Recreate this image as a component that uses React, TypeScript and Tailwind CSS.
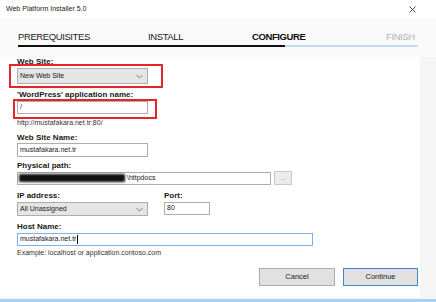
import React from 'react';

const font = { fontFamily: '"Liberation Sans", Arial, sans-serif' };

function Chevron() {
  return (
    <svg width="7" height="5" viewBox="0 0 7 5" className="text-[#707070]">
      <path d="M0.5 1 L3.5 4 L6.5 1" fill="none" stroke="currentColor" strokeWidth="0.9" />
    </svg>
  );
}

function Select({ value, width }: { value: string; width: string }) {
  return (
    <div className={`flex h-[14px] ${width} items-center justify-between border border-[#adadad] bg-[#e5e5e5] pl-[2px] pr-[4px] text-[7px] text-[#1a1a1a]`}>
      <span>{value}</span>
      <Chevron />
    </div>
  );
}

function Label({ text, className = '' }: { text: string; className?: string }) {
  return <div className={`h-[10px] text-[8px] font-bold leading-[10px] text-[#1a1a1a] ${className}`}>{text}</div>;
}

export default function App() {
  return (
    <div className="flex h-[302px] w-[436px] flex-col overflow-hidden bg-[#f6f6f6]" style={font}>
      {/* title bar */}
      <div className="flex h-[18px] items-center justify-between bg-white pl-[6px] pr-[20px]">
        <span className="text-[7px] text-[#222]">Web Platform Installer 5.0</span>
        <svg width="7" height="7" viewBox="0 0 7 7" className="text-[#333]">
          <path d="M0.5 0.5 L6.5 6.5 M6.5 0.5 L0.5 6.5" stroke="currentColor" strokeWidth="0.9" />
        </svg>
      </div>

      {/* steps */}
      <div className="h-[39px] bg-[#fafafa] pl-[18px] pt-[12px]">
        <div className="flex h-[14px] w-[400px] items-center text-[9.5px] tracking-[-0.4px]">
          <span className="w-[130px] text-[#222]">PREREQUISITES</span>
          <span className="w-[104px] text-[#222]">INSTALL</span>
          <span className="w-[134px] font-bold text-[#111]">CONFIGURE</span>
          <span className="text-[#b5b5b5]">FINISH</span>
        </div>
        <div className="mt-[1px] flex h-[2px] w-[400px]">
          <div className="w-[267px] bg-[#111]" />
          <div className="flex-1 bg-[#c5dcf0]" />
        </div>
      </div>

      {/* form panel */}
      <div className="flex h-[240px] w-[420px] flex-col bg-white pl-[17px] text-[#1a1a1a]">
        <Label text="Web Site:" />
        <div className="ml-[-8px] mt-[-3px] h-[24px] w-[154px] border-2 border-[#e2262a] pl-[6px] pt-[2px]">
          <div className="flex h-[16px] w-[131px] items-center justify-between border border-[#adadad] bg-[#e5e5e5] pl-[2px] pr-[4px] text-[7px]">
            <span>New Web Site</span>
            <Chevron />
          </div>
        </div>

        <Label text="'WordPress' application name:" className="mt-[2px]" />
        <div className="ml-[-4px] mt-[-1px] h-[20px] w-[144px] border-2 border-[#e2262a] pl-[2px]">
          <div className="flex h-[13px] w-[131px] items-center border border-[#adadad] bg-white pl-[2px] text-[7px]">/</div>
        </div>
        <div className="mt-[-1px] h-[10px] text-[7px] leading-[10px] text-[#333]">http://mustafakara.net.tr:80/</div>

        <Label text="Web Site Name:" className="mt-[5px]" />
        <div className="flex h-[14px] w-[131px] items-center border border-[#adadad] bg-white pl-[2px] text-[7px]">mustafakara.net.tr</div>

        <Label text="Physical path:" className="mt-[4px]" />
        <div className="flex items-center gap-[3px]">
          <div className="flex h-[13px] w-[254px] items-center border border-[#adadad] bg-white pl-[1px] text-[7px]">
            <div className="h-[8px] w-[106px] rounded-[1px] bg-[#111] blur-[0.8px]" />
            <span className="ml-[2px]">\httpdocs</span>
          </div>
          <div className="flex h-[14px] w-[18px] items-center justify-center border border-[#c8c8c8] bg-[#ececec] text-[6px] leading-none text-[#777]">...</div>
        </div>

        <div className="mt-[6px] flex h-[10px]">
          <Label text="IP address:" className="w-[147px]" />
          <Label text="Port:" />
        </div>
        <div className="mt-[1px] flex gap-[16px]">
          <Select value="All Unassigned" width="w-[131px]" />
          <div className="flex h-[13px] w-[46px] items-center border border-[#adadad] bg-white pl-[2px] text-[7px]">80</div>
        </div>

        <Label text="Host Name:" className="mt-[6px]" />
        <div className="mt-[1px] flex h-[13px] w-[296px] items-center border border-[#7ab4ea] bg-white pl-[2px] text-[7px]">
          mustafakara.net.tr<span className="ml-[0.5px] h-[9px] w-[0.8px] bg-black" />
        </div>
        <div className="mt-[2px] h-[10px] text-[7px] leading-[10px] text-[#333]">Example: localhost or application.contoso.com</div>

        <div className="mt-[10px] flex justify-end gap-[8px] pr-[2px]">
          <button className="flex h-[18px] w-[76px] items-center justify-center border border-[#adadad] bg-[#e1e1e1] text-[7.5px] text-[#1a1a1a]">Cancel</button>
          <button className="flex h-[18px] w-[75px] items-center justify-center border border-[#3e86cf] bg-[#e1e1e1] text-[7.5px] text-[#1a1a1a]">Continue</button>
        </div>
      </div>

      <div className="mt-auto h-[3px] bg-[#a9d0ef]" />
    </div>
  );
}
